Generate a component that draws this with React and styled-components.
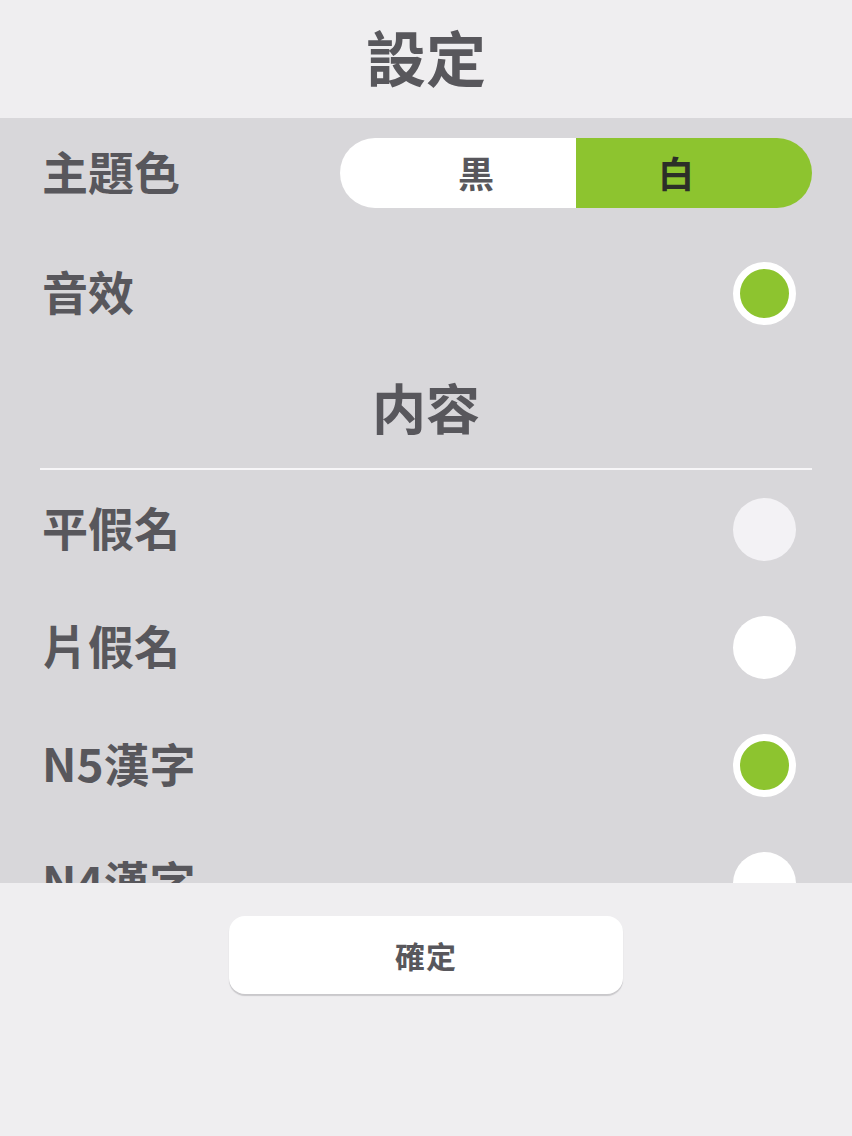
import React from "react";
import styled, { createGlobalStyle } from "styled-components";

const Global = createGlobalStyle`
  html, body { margin: 0; padding: 0; background: #efeef0; }
  body { font-family: "Noto Sans CJK TC", "Noto Sans CJK SC", "Noto Sans", sans-serif; }
  #root { width: 852px; height: 1136px; }
`;

const Page = styled.div`
  width: 852px;
  height: 1136px;
  display: flex;
  flex-direction: column;
  background: #efeef0;
  color: #58575c;
`;

const Header = styled.header`
  height: 118px;
  flex: none;
  display: flex;
  align-items: center;
  justify-content: center;
`;

const Title = styled.h1`
  margin: 0;
  font-size: 60px;
  font-weight: 700;
  line-height: 1;
  padding-bottom: 6px;
`;

const Panel = styled.main`
  height: 765px;
  flex: none;
  overflow: hidden;
  background: #d8d7da;
  padding: 0 40px;
  box-sizing: border-box;
`;

const Row = styled.div`
  height: ${(p) => p.$h || 118}px;
  display: flex;
  align-items: center;
  justify-content: space-between;
  padding-left: 2px;
  padding-right: 16px;
`;

const Label = styled.span`
  font-size: 46px;
  font-weight: 700;
  line-height: 1;
  padding-bottom: 7px;
`;

const Toggle = styled.div`
  width: 472px;
  height: 70px;
  margin-right: -16px;
  border-radius: 35px;
  overflow: hidden;
  display: flex;
`;

const ToggleOpt = styled.div`
  flex: 1;
  display: flex;
  align-items: center;
  justify-content: center;
  box-sizing: border-box;
  padding-left: ${(p) => (p.$side === "left" ? 36 : 0)}px;
  padding-right: ${(p) => (p.$side === "right" ? 36 : 0)}px;
  padding-bottom: 3px;
  background: ${(p) => (p.$on ? "#8dc42f" : "#ffffff")};
  color: ${(p) => (p.$on ? "#2c2e28" : "#58575c")};
  font-size: 36px;
  font-weight: 700;
`;

const Radio = styled.div`
  width: 63px;
  height: 63px;
  box-sizing: border-box;
  border-radius: 50%;
  background: ${(p) => (p.$on ? "#8dc42f" : p.$dim ? "#f3f2f5" : "#ffffff")};
  border: ${(p) => (p.$on ? "7px solid #ffffff" : "none")};
`;

const SectionTitle = styled.h2`
  margin: 0;
  height: 110px;
  display: flex;
  align-items: center;
  justify-content: center;
  padding-bottom: 12px;
  box-sizing: border-box;
  font-size: 54px;
  font-weight: 700;
  line-height: 1;
`;

const Divider = styled.hr`
  margin: 0;
  border: none;
  height: 2px;
  background: #f7f6f8;
`;

const Footer = styled.footer`
  flex: 1;
  display: flex;
  justify-content: center;
  padding-top: 33px;
`;

const Button = styled.button`
  width: 394px;
  height: 78px;
  border: none;
  border-radius: 16px;
  background: #ffffff;
  box-shadow: 0 2px 1px #c9c8cb;
  color: #58575c;
  font-family: inherit;
  font-size: 30px;
  font-weight: 700;
  letter-spacing: 1px;
`;

const items = [
  { label: "平假名", on: false, dim: true },
  { label: "片假名", on: false },
  { label: "N5漢字", on: true },
  { label: "N4漢字", on: false },
];

export default function App() {
  return (
    <Page>
      <Global />
      <Header>
        <Title>設定</Title>
      </Header>
      <Panel>
        <Row $h={110}>
          <Label>主題色</Label>
          <Toggle>
            <ToggleOpt $side="left">黒</ToggleOpt>
            <ToggleOpt $side="right" $on>白</ToggleOpt>
          </Toggle>
        </Row>
        <Row $h={130}>
          <Label>音效</Label>
          <Radio $on />
        </Row>
        <SectionTitle>内容</SectionTitle>
        <Divider />
        {items.map((it) => (
          <Row key={it.label}>
            <Label>{it.label}</Label>
            <Radio $on={it.on} $dim={it.dim} />
          </Row>
        ))}
      </Panel>
      <Footer>
        <Button>確定</Button>
      </Footer>
    </Page>
  );
}
